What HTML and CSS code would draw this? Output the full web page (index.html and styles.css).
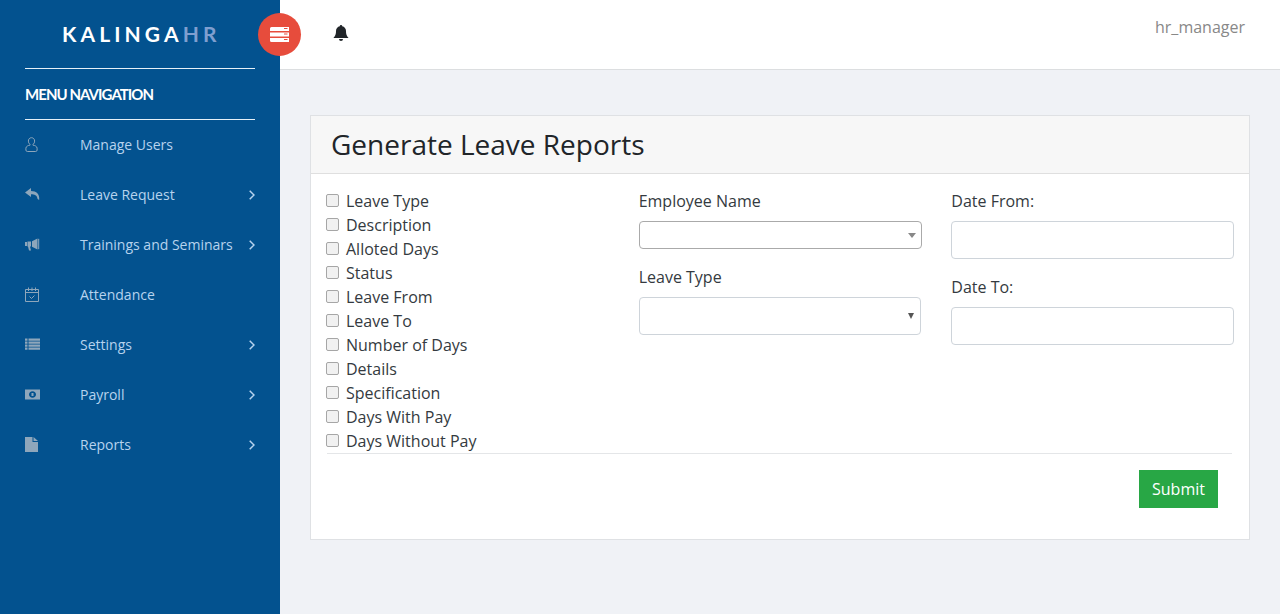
FILE: index.html
```html
<!DOCTYPE html>
<html lang="en">
<head>
<meta charset="utf-8">
<title>Generate Leave Reports</title>
<link rel="stylesheet" href="styles.css">
</head>
<body>
<div class="app">
  <aside class="sidebar">
    <div class="logo"><span>KALINGA</span><span class="logo-hr">HR</span></div>
    <div class="menu-title">MENU NAVIGATION</div>
    <nav class="menu">
      <a class="menu-item"><svg class="icon" viewBox="0 0 15 15" preserveAspectRatio="xMinYMid"><path d="M6.500.7a3.100 3.100 0 0 1 3.100 3.400c0 1.500-.7 2.700-1.700 3.300v.7c2 .3 4.200 1.300 4.200 3.100v1.900c0 .8-.6 1.400-1.400 1.400H2.300c-.8 0-1.400-.6-1.400-1.400v-1.900c0-1.800 2.200-2.800 4.200-3.100v-.7c-1-.6-1.700-1.800-1.700-3.300A3.100 3.100 0 0 1 6.500.7z" fill="none" stroke="currentColor"/></svg><span class="menu-label">Manage Users</span></a>
      <a class="menu-item"><svg class="icon" viewBox="0 0 15 15" preserveAspectRatio="xMinYMid"><path d="M6 1 0 5.500 6 10V7.300c3.600 0 6 .8 6.600 4.700l1.600 1c.6-6.300-2.700-9-8.200-9z" fill="currentColor"/></svg><span class="menu-label">Leave Request</span><svg class="chev" viewBox="0 0 6 10"><path d="M.7.7 5 5 .7 9.300" fill="none" stroke="currentColor" stroke-width="1.500"/></svg></a>
      <a class="menu-item"><svg class="icon" viewBox="0 0 15 15" preserveAspectRatio="xMinYMid"><path d="M0 5h2v4H0zM2.500 4.500h3.500v5H5l1 4H4l-1-4h-.5zM7 4.200 12.500 1.500v11L7 9.800z" fill="currentColor"/><path d="M13.700 1.800v10.400" stroke="currentColor"/></svg><span class="menu-label">Trainings and Seminars</span><svg class="chev" viewBox="0 0 6 10"><path d="M.7.700 5 5 .7 9.300" fill="none" stroke="currentColor" stroke-width="1.500"/></svg></a>
      <a class="menu-item"><svg class="icon" viewBox="0 0 15 15" preserveAspectRatio="xMinYMid"><path d="M.5 2.500h13v12H.5zM.5 5.500h13M3.500.5v3.500M7 .5v3.500M10.500.5v3.500M4.500 9.500l2 2 3-3" fill="none" stroke="currentColor"/></svg><span class="menu-label">Attendance</span></a>
      <a class="menu-item"><svg class="icon" viewBox="0 0 15 15" preserveAspectRatio="xMinYMid"><path d="M0 1.500h2.500v2.200H0zM3.500 1.500H15v2.200H3.500zM0 4.500h2.500v2.200H0zM3.500 4.500H15v2.200H3.500zM0 7.500h2.500v2.200H0zM3.500 7.500H15v2.200H3.500zM0 10.500h2.500v2.200H0zM3.500 10.500H15v2.200H3.500z" fill="currentColor"/></svg><span class="menu-label">Settings</span><svg class="chev" viewBox="0 0 6 10"><path d="M.7.700 5 5 .7 9.300" fill="none" stroke="currentColor" stroke-width="1.500"/></svg></a>
      <a class="menu-item"><svg class="icon" viewBox="0 0 15 15" preserveAspectRatio="xMinYMid"><path fill-rule="evenodd" d="M0 2.500h15v10H0zM7.500 4.200c-2 0-3.500 1.500-3.500 3.300s1.500 3.300 3.500 3.300 3.500-1.500 3.500-3.300-1.500-3.300-3.500-3.300z" fill="currentColor"/><path d="M6.500 6h2v3h-2z" fill="currentColor"/></svg><span class="menu-label">Payroll</span><svg class="chev" viewBox="0 0 6 10"><path d="M.7.700 5 5 .7 9.300" fill="none" stroke="currentColor" stroke-width="1.500"/></svg></a>
      <a class="menu-item"><svg class="icon" viewBox="0 0 15 15" preserveAspectRatio="xMinYMid"><path d="M0 0h7.500v5H13v10H0zM8.500 0 13 4H8.500z" fill="currentColor"/></svg><span class="menu-label">Reports</span><svg class="chev" viewBox="0 0 6 10"><path d="M.7.700 5 5 .7 9.300" fill="none" stroke="currentColor" stroke-width="1.500"/></svg></a>
    </nav>
  </aside>
  <div class="main">
    <header class="topbar">
      <button class="toggle" type="button" aria-label="Toggle menu"><svg viewBox="0 0 19 15" width="19" height="15"><path d="M0 1.500A1.500 1.500 0 0 1 1.500 0H19v4H0zM0 5.500h19v4H0zM0 11h19v4H1.500A1.500 1.500 0 0 1 0 13.500z" fill="#fff"/><path d="M14 1.500h3.500M14 7h3.500M14 12.500h3.500" stroke="#e74c3c"/></svg></button>
      <svg class="bell" viewBox="0 0 16 16" width="16" height="16"><path d="M8 0a1.200 1.200 0 0 1 1.200 1.300C11.500 1.800 13 3.600 13 6c0 4 1.100 5.300 2.500 7H.5C1.900 11.300 3 10 3 6c0-2.400 1.500-4.200 3.800-4.700A1.200 1.200 0 0 1 8 0zM6 14h4a2 2 0 0 1-4 0z" fill="#212529"/></svg>
      <span class="user">hr_manager</span>
    </header>
    <main class="content">
      <section class="card">
        <h1 class="card-header">Generate Leave Reports</h1>
        <form class="card-body">
          <div class="col checks">
            <label class="check"><input type="checkbox">Leave Type</label>
            <label class="check"><input type="checkbox">Description</label>
            <label class="check"><input type="checkbox">Alloted Days</label>
            <label class="check"><input type="checkbox">Status</label>
            <label class="check"><input type="checkbox">Leave From</label>
            <label class="check"><input type="checkbox">Leave To</label>
            <label class="check"><input type="checkbox">Number of Days</label>
            <label class="check"><input type="checkbox">Details</label>
            <label class="check"><input type="checkbox">Specification</label>
            <label class="check"><input type="checkbox">Days With Pay</label>
            <label class="check"><input type="checkbox">Days Without Pay</label>
          </div>
          <div class="col">
            <div class="field-label">Employee Name</div>
            <div class="select2"><span class="arrow arrow-grey"></span></div>
            <div class="field-label second">Leave Type</div>
            <div class="control select-control"><span class="arrow arrow-dark"></span></div>
          </div>
          <div class="col">
            <div class="field-label">Date From:</div>
            <input class="control" type="text">
            <div class="field-label">Date To:</div>
            <input class="control" type="text">
          </div>
        </form>
        <div class="card-footer"><button class="submit" type="button">Submit</button></div>
      </section>
    </main>
  </div>
</div>
</body>
</html>
```
FILE: styles.css
```css
* { box-sizing: border-box; }
html, body { margin: 0; height: 100%; }
body { font-family: "Open Sans", sans-serif; font-size: 16px; color: #212529; overflow: hidden; }
.app { display: flex; height: 614px; }

.sidebar { width: 280px; flex: none; background: #03528f; color: #fff; padding: 0 25px; }
.logo { height: 69px; padding: 21px 0 0 37px; border-bottom: 1px solid #e6f0f8; font-family: Lato, sans-serif; font-weight: 700; font-size: 21px; line-height: 26px; letter-spacing: 4.1px; white-space: nowrap; }
.logo-hr { color: #7f9fd0; }
.menu-title { height: 51px; border-bottom: 1px solid #e6f0f8; font-family: Lato, sans-serif; font-weight: 700; font-size: 15px; line-height: 50px; letter-spacing: -0.95px; }
.menu { display: flex; flex-direction: column; margin-top: -1px; }
.menu-item { height: 50px; display: flex; align-items: center; color: #b7d3ee; font-size: 14px; white-space: nowrap; }
.icon { width: 15px; height: 15px; flex: none; color: #8ea6bb; }
.menu-label { margin-left: 40px; flex: 1; }
.chev { width: 6px; height: 10px; flex: none; color: #b7d3ee; margin-top: 1px; }

.main { flex: 1; min-width: 0; background: #f0f2f6; display: flex; flex-direction: column; }
.topbar { height: 70px; flex: none; background: #fff; border-bottom: 1px solid #dcdee0; display: flex; align-items: flex-start; position: relative; }
.toggle { position: absolute; left: -22px; top: 13px; width: 43px; height: 43px; border: 0; border-radius: 50%; background: #e74c3c; padding: 0; display: flex; align-items: center; justify-content: center; }
.bell { margin: 25px 0 0 53px; }
.user { margin-left: auto; margin-right: 35px; margin-top: 16px; color: #888; font-size: 16px; line-height: 22px; }

.content { padding: 45px 30px 0; }
.card { background: #fff; border: 1px solid #dfe1e4; height: 425px; }
.card-header { margin: 0; height: 58px; padding: 0 20px; background: #f7f7f7; border-bottom: 1px solid #dfdfdf; font-size: 28px; font-weight: 400; line-height: 57px; color: #212529; }
.card-body { display: grid; grid-template-columns: repeat(3, 1fr); height: 279px; margin: 0; }
.col { padding: 15px 15px 0; min-width: 0; }
.check { display: flex; align-items: center; height: 24px; line-height: 24px; color: #343a40; white-space: nowrap; }
.check input { appearance: none; width: 13px; height: 13px; margin: -2px 7px 0 0; flex: none; border: 1px solid #a6a6a6; border-radius: 2px; background: #f1f1f1; }
.field-label { line-height: 24px; height: 24px; margin-bottom: 8px; color: #343a40; }
.second { margin-top: 16px; }
.select2 { height: 28px; width: 283px; border: 1px solid #aaa; border-radius: 4px; background: #fff; position: relative; }
.control { display: block; width: 100%; height: 38px; border: 1px solid #ced4da; border-radius: 4px; background: #fff; padding: 6px 12px; margin: 0 0 16px; position: relative; font: inherit; }
.select-control { width: 282px; }
.arrow { position: absolute; top: 50%; width: 0; height: 0; }
.arrow-grey { right: 5px; margin-top: -2px; border-left: 4px solid transparent; border-right: 4px solid transparent; border-top: 5px solid #888; }
.arrow-dark { right: 6px; margin-top: -3px; border-left: 3px solid transparent; border-right: 3px solid transparent; border-top: 6px solid #555; }

.card-footer { margin: 0 17px 0 16px; border-top: 1px solid #e4e6e8; padding: 16px 14px 0 0; display: flex; justify-content: flex-end; }
.submit { width: 79px; height: 38px; border: 0; background: #28a745; color: #fff; font: inherit; font-size: 16px; padding: 0; }
```
